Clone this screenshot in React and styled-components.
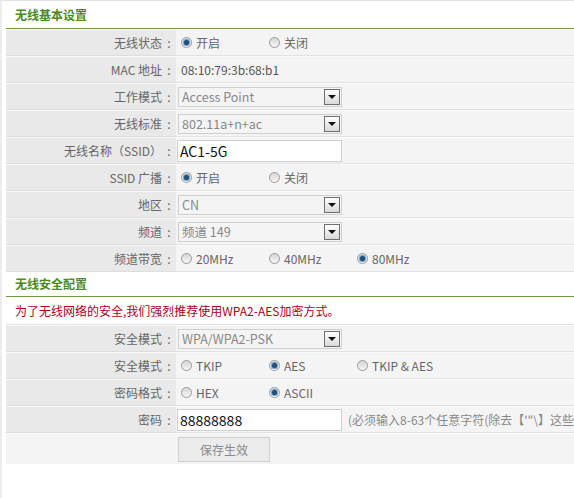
import React from 'react';
import styled, { createGlobalStyle } from 'styled-components';

const GlobalStyle = createGlobalStyle`
  html, body {
    margin: 0;
    padding: 0;
    background: #ffffff;
    overflow: hidden;
  }
  body {
    font-family: "Noto Sans CJK SC", "Liberation Sans", sans-serif;
    font-size: 12px;
    color: #666;
    text-spacing-trim: space-all;
  }
`;

const Page = styled.div`
  width: 720px;
  height: 498px;
  border-top: 1px solid #e2e2e2;
  border-left: 2px solid #ececec;
  padding-left: 4px;
  box-sizing: border-box;
`;

const SectionTitle = styled.div`
  height: ${p => p.$h}px;
  line-height: ${p => p.$h}px;
  padding-left: 9px;
  color: #4c8a26;
  font-weight: bold;
  font-size: 12px;
  border-bottom: 1px solid #6c9a45;
`;

const Table = styled.div`
  display: grid;
  grid-template-columns: 170px 1fr;
`;

const Label = styled.div`
  height: 25px;
  line-height: 25px;
  background: #e9e9e9;
  border-top: 1px solid #f8f8f8;
  border-bottom: 1px solid #dedede;
  text-align: right;
  padding-right: 0;
  white-space: nowrap;
  color: #666;
`;

const Colon = styled.span`
  display: inline-block;
  width: 14px;
  text-align: center;
`;

const Value = styled.div`
  height: 25px;
  background: #f4f4f4;
  border-top: 1px solid #fbfbfb;
  border-bottom: 1px solid #e2e2e2;
  display: flex;
  align-items: center;
  padding-left: ${p => p.$pad || 2}px;
  white-space: nowrap;
  color: #555;
`;

const ButtonCell = styled(Value)`
  height: 30px;
  border-bottom: none;
`;

const Blank = styled(Label)`
  height: 30px;
  background: #f4f4f4;
  border-bottom: none;
`;

const Warning = styled.div`
  height: 27px;
  line-height: 27px;
  padding-left: 9px;
  color: #a8001a;
  border-bottom: 1px solid #e4e4e4;
`;

const RadioOption = styled.label`
  width: 88px;
  display: flex;
  align-items: center;
  gap: 4px;
  color: #666;
`;

const RadioDot = styled.span`
  width: 11px;
  height: 11px;
  border-radius: 50%;
  border: 1px solid #9a9a9a;
  background: linear-gradient(#d6d6d6, #f6f6f6);
  box-sizing: border-box;
  display: inline-flex;
  align-items: center;
  justify-content: center;
  &::after {
    content: '';
    width: 5px;
    height: 5px;
    border-radius: 50%;
    background: ${p => (p.$on ? '#1c4f7c' : 'transparent')};
    box-shadow: ${p => (p.$on ? '0 0 0 1px #6f9cc4' : 'none')};
  }
`;

const SelectBox = styled.div`
  width: 164px;
  height: 20px;
  box-sizing: border-box;
  border: 1px solid #cfcfcf;
  background: #f4f4f4;
  display: flex;
  align-items: center;
  justify-content: space-between;
  padding: 0 1px 0 3px;
  color: #888;
  font-size: 12.5px;
`;

const Arrow = styled.span`
  width: 16px;
  height: 16px;
  box-sizing: border-box;
  border: 1px solid #6e6e6e;
  background: linear-gradient(#ffffff, #d9d9d9);
  display: flex;
  align-items: center;
  justify-content: center;
  &::after {
    content: '';
    border-left: 4px solid transparent;
    border-right: 4px solid transparent;
    border-top: 4px solid #111;
  }
`;

const TextInput = styled.div`
  width: 165px;
  height: 22px;
  box-sizing: border-box;
  border: 1px solid #cfcfcf;
  background: #fff;
  color: #111;
  font-size: 14px;
  line-height: 20px;
  padding-left: 2px;
`;

const Hint = styled.span`
  margin-left: 6px;
  color: #888;
`;

const SaveButton = styled.button`
  width: 92px;
  height: 25px;
  border: 1px solid #cfcfcf;
  background: #ececec;
  color: #888;
  font-family: inherit;
  font-size: 12px;
  padding: 0;
`;

const Radios = ({ options, selected }) => (
  <>
    {options.map(o => (
      <RadioOption key={o}>
        <RadioDot $on={o === selected} />
        {o}
      </RadioOption>
    ))}
  </>
);

const Select = ({ value }) => (
  <SelectBox>
    {value}
    <Arrow />
  </SelectBox>
);

const Field = ({ children }) => (
  <Label>
    {children}
    <Colon>:</Colon>
  </Label>
);

const App = () => (
  <Page>
    <GlobalStyle />
    <SectionTitle $h={27}>无线基本设置</SectionTitle>
    <Table>
      <Field>无线状态</Field>
      <Value $pad={5}><Radios options={['开启', '关闭']} selected="开启" /></Value>
      <Field>MAC 地址</Field>
      <Value $pad={5}>08:10:79:3b:68:b1</Value>
      <Field>工作模式</Field>
      <Value><Select value="Access Point" /></Value>
      <Field>无线标准</Field>
      <Value><Select value="802.11a+n+ac" /></Value>
      <Field>无线名称（SSID）</Field>
      <Value $pad={1}><TextInput>AC1-5G</TextInput></Value>
      <Field>SSID 广播</Field>
      <Value $pad={5}><Radios options={['开启', '关闭']} selected="开启" /></Value>
      <Field>地区</Field>
      <Value><Select value="CN" /></Value>
      <Field>频道</Field>
      <Value><Select value="频道 149" /></Value>
      <Field>频道带宽</Field>
      <Value $pad={5}><Radios options={['20MHz', '40MHz', '80MHz']} selected="80MHz" /></Value>
    </Table>
    <SectionTitle $h={24}>无线安全配置</SectionTitle>
    <Warning>为了无线网络的安全,我们强烈推荐使用WPA2-AES加密方式。</Warning>
    <Table>
      <Field>安全模式</Field>
      <Value><Select value="WPA/WPA2-PSK" /></Value>
      <Field>安全模式</Field>
      <Value $pad={5}><Radios options={['TKIP', 'AES', 'TKIP & AES']} selected="AES" /></Value>
      <Field>密码格式</Field>
      <Value $pad={5}><Radios options={['HEX', 'ASCII']} selected="ASCII" /></Value>
      <Field>密码</Field>
      <Value $pad={1}>
        <TextInput>88888888</TextInput>
        <Hint>(必须输入8-63个任意字符(除去【'"\】这些字符))</Hint>
      </Value>
      <Blank />
      <ButtonCell $pad={0}><SaveButton>保存生效</SaveButton></ButtonCell>
    </Table>
  </Page>
);

export default App;
